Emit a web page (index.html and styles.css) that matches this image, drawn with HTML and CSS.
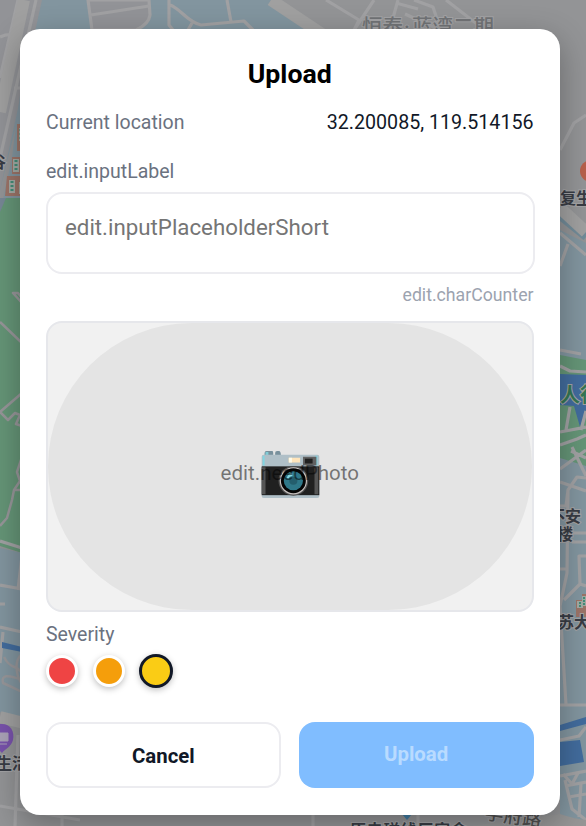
FILE: index.html
```html
<!DOCTYPE html>
<html lang="en">
<head>
<meta charset="utf-8">
<title>Upload</title>
<link rel="stylesheet" href="styles.css">
</head>
<body>
<svg class="map" viewBox="0 0 586 826" aria-hidden="true">
  <rect width="586" height="826" fill="#939496"/>
  <path d="M40 0H272L315 30V60H0V190L20 110Z" fill="#82959f"/>
  <path d="M0 0H42L0 190Z" fill="#929397"/>
  <path d="M88 0H149L150 15Q149 24 136 30H92Z" fill="#929397" class="street"/>
  <path d="M91 15L149 6M169 0V25L173 30M170 5C180 8 187 22 201 25L244 21L253 30M227 0L231 22M192 23L188 30" class="street"/>
  <path d="M18 0L0 78M36 0L0 158M0 37Q8 33 20 36M14 88H22" class="street"/>
  <path d="M24 0L0 112" class="road"/>
  <path d="M271 0L325 36" class="road"/>
  <path d="M326 0L359 20L354 30M374 0L354 30M398 0L393 18L390 30M396 3L418 9M414 0L433 7L438 22M446 0L495 38M405 14L440 30" class="street"/>
  <path d="M560 150L574 123L586 115" class="street"/>
  <path d="M20 95V200H3L12 157Z" fill="#82959f"/>
  <path d="M17 124H24V151H17ZM12 157H23V174H12ZM7 176H24V196H5Z" fill="#9c7468"/>
  <path d="M13 159h6v13h-6zM9 180h6v13H9zM19 128h5v13h-5zM19 182h5v12h-5z" fill="#a3aaa4"/>
  <path d="M16 160v12M12 181v12M21 129v12" stroke="#438d78" stroke-width="3" stroke-dasharray="2 2"/>
  <path d="M0 198H22V553L0 546Z" fill="#659577"/>
  <path d="M0 198H6L0 212Z" fill="#778795"/>
  <path d="M22 303L13 293H18L22 298M0 322L22 343M22 393L0 412L8 420L15 413L20 415L16 424L22 426M22 457L17 472L20 481L14 490L12 500L7 518L0 526M14 490H22" class="path"/>
  <path d="M0 548L22 553V717L0 712Z" fill="#82959f"/>
  <path d="M0 541L22 548M0 585L22 589M0 604H5M22 556L18 590M0 627L22 632M3 632L0 663" class="street"/>
  <path d="M2 642L22 647V652L2 648Z" fill="#426c9d"/>
  <path d="M4 657C11 671 18 664 22 674M22 654C12 662 18 679 22 684M22 680Q0 671 3 683Q12 687 22 692" class="path"/>
  <path d="M0 717L24 723" class="road"/>
  <path d="M18 735L15 826M0 806L80 820M62 814V826M313 814V826M418 814V826" class="street"/>
  <path d="M0 724C10 723 15 731 13 740C11 747 5 749 2 753L0 751Z" fill="#7852ab"/>
  <path d="M0 733H8V741H0M0 744H7" fill="#aaa2b7" stroke="#aaa2b7"/>
  <path d="M560 230L586 243V826H560Z" fill="#82959f"/>
  <path d="M560 216L586 237" stroke="#728b98" stroke-width="8"/>
  <path d="M560 208L586 232" class="road"/>
  <path d="M560 233L586 255M568 244L560 266" class="street"/>
  <path d="M560 355L586 360V466L560 458Z" fill="#659577"/>
  <path d="M560 374L586 375V410L580 427L574 406L560 405Z" fill="#426c9d"/>
  <path d="M560 350L581 354M560 366L570 371L586 372M570 407L566 430M586 411L581 430M560 432L586 427M560 445L577 439L586 435M560 469L586 450M572 447L586 476M560 482L586 491M571 451L586 458" class="street"/>
  <path d="M586 478L577 477L568 490L566 506L560 506M568 490L567 573L560 606L566 705M572 533H586M572 542H586M560 569H568M586 556H579L580 584L564 600M580 584L586 586M560 705H586" class="street"/>
  <path d="M576 600H582V594H586V617H576Z" fill="#9c7468"/>
  <path d="M577 601h6v7h-6zM582 596h4v10h-4z" fill="#a3aaa4"/>
  <path d="M580 602v6M584 597v9" stroke="#438d78" stroke-width="2" stroke-dasharray="2 1"/>
  <path d="M560 725L586 717V724L560 731Z" fill="#426c9d"/>
  <path d="M560 742L580 740L584 762L560 766Z" fill="#426c9d"/>
  <path d="M560 740L579 736L586 727M560 776L586 771M563 774L572 784L578 773M565 786L586 782M565 780L572 809L586 820M569 797L586 794M581 783L579 817" class="street"/>
  <path d="M470 826L560 814Q575 819 586 820V826Z" fill="#969696"/>
  <circle cx="591" cy="171" r="11" fill="#b7604b"/>
  <path d="M402 814H412L407 820Z" fill="#417ca3"/>
  <g class="place">
    <text x="362" y="34" class="area">恒泰<tspan class="dot" x="404">·</tspan><tspan x="412">蓝湾二期</tspan></text>
    <text x="560" y="204" class="small">复生</text>
    <text x="-10" y="168" class="small">谷</text>
    <text x="-4" y="769" class="small">生活</text>
    <text x="560" y="402" class="park">人行</text>
    <text x="549" y="522" class="small">不安</text>
    <text x="557" y="540" class="small">楼</text>
    <text x="558" y="628" class="small">苏大</text>
    <text x="350" y="836" class="small" textLength="117">原电磁线厂宿舍</text>
    <text x="484" y="819" class="way" transform="rotate(8 484 819)">学府路</text>
  </g>
</svg>
<main class="dialog">
  <h1 class="title">Upload</h1>
  <div class="location"><span class="label">Current location</span><span class="coords">32.200085, 119.514156</span></div>
  <label class="label input-label" for="note">edit.inputLabel</label>
  <textarea class="note" id="note" placeholder="edit.inputPlaceholderShort"></textarea>
  <div class="counter">edit.charCounter</div>
  <div class="photo">
    <button class="camera" aria-label="Camera">
      <svg class="camera-icon" viewBox="0 0 60 50">
        <path d="M3 5V2Q3 0 5 0H11Q12 0 12 2V5M14 5V2Q14 0 16 0H18Q20 0 20 5" fill="#78909c"/>
        <path d="M4 1H7V5H4Z" fill="#80cbd5"/>
        <rect y="4" width="60" height="45" rx="2" fill="#afbfc7"/>
        <path d="M2 5V15M57 5V15" stroke="#82d5e1" stroke-width="2"/>
        <rect y="16" width="60" height="30" fill="#202020"/>
        <path d="M2 17V45M57 17V45" stroke="#555" stroke-width="4"/>
        <rect x="28" y="7" width="12" height="5" fill="#ffe5bb"/>
        <path d="M30 7V12" stroke="#fffbe8" stroke-width="3"/>
        <rect x="43" y="6" width="14" height="9" fill="#616161"/>
        <rect x="45" y="8" width="8" height="5" fill="#202020"/>
        <circle cx="33" cy="31" r="15.5" fill="#505050"/>
        <circle cx="33" cy="31" r="14.2" fill="#c8c2c0"/>
        <circle cx="33" cy="31" r="13" fill="#050505"/>
        <circle cx="33" cy="31" r="10" fill="#2f7889"/>
        <circle cx="33" cy="31" r="4.2" fill="#245e6d"/>
        <path d="M26 28Q28 23 32 23V26Q29 26 28 29Z" fill="#82d5e1"/>
      </svg>
    </button>
    <span class="photo-hint">edit.needPhoto</span>
  </div>
  <div class="label severity-label">Severity</div>
  <div class="levels">
    <button class="level high" aria-label="High"></button>
    <button class="level medium" aria-label="Medium"></button>
    <button class="level low selected" aria-label="Low"></button>
  </div>
  <div class="actions">
    <button class="action cancel">Cancel</button>
    <button class="action upload" disabled>Upload</button>
  </div>
</main>
</body>
</html>
```
FILE: styles.css
```css
* { box-sizing: border-box; }
body {
  margin: 0;
  height: 826px;
  overflow: hidden;
  padding: 29px 26px 0 20px;
  font-family: Roboto, "Noto Sans CJK SC", sans-serif;
  color: #111827;
}
button { font: inherit; padding: 0; border: 0; }
.map { position: absolute; left: 0; top: 0; width: 586px; height: 826px; }
.street, .path, .road { stroke: #a1a1a3; stroke-width: 3.2; stroke-linejoin: round; }
.street:not([fill]), .path, .road { fill: none; }
.path { stroke: #979699; stroke-width: 2.5; }
.road { stroke: #a0a0a0; stroke-width: 12; }
.place { font-family: "Noto Sans CJK SC", sans-serif; font-weight: 700; paint-order: stroke; stroke: #a3a3a5; stroke-width: 2px; fill: #383c44; }
.area { font-size: 20.5px; font-weight: 500; fill: #717376; }
.dot { font-family: Roboto, sans-serif; }
.small { font-size: 16px; }
.park { font-size: 20px; fill: #347653; }
.way { font-size: 19px; font-weight: 500; fill: #515151; }
.dialog {
  position: relative;
  display: flex;
  flex-direction: column;
  width: 540px;
  height: 785.5px;
  padding: 26px 26.5px 26px 26px;
  border-radius: 20px;
  background: #fff;
  box-shadow: 0 10px 32px rgba(0, 0, 0, .3);
}
.title { margin: 0; font-size: 26.7px; line-height: 38px; font-weight: 700; text-align: center; color: #000; }
.location { display: flex; justify-content: space-between; height: 30px; margin-top: 14px; }
.coords { font-size: 19.65px; line-height: 31px; }
.label { color: #6b7280; font-size: 19.5px; }
.location .label { line-height: 32px; }
.input-label { margin-top: 21px; line-height: 28px; }
.note {
  display: block;
  width: 489px;
  height: 82px;
  margin: 6px 0 0;
  padding: 17px;
  border: 2px solid #ececf0;
  border-radius: 16px;
  resize: none;
  font: 22.3px/33px Roboto, sans-serif;
}
.note::placeholder { color: #757575; }
.counter { margin-top: 7px; font-size: 17.7px; line-height: 28px; text-align: right; color: #9ca3af; }
.photo { display: grid; height: 291px; margin-top: 12px; border: 2px solid #e6e7eb; border-radius: 16px; background: #f1f1f1; overflow: hidden; }
.photo > * { grid-area: 1 / 1; }
.camera { display: grid; place-items: center; border-radius: 145px; background: #e4e4e4; }
.camera-icon { width: 59px; height: 48px; margin: 16px 0 0 2px; overflow: visible; }
.photo-hint { place-self: center; margin-top: 12px; font-size: 20.5px; line-height: 28px; color: rgba(0, 0, 0, .5); }
.severity-label { margin-top: 9px; line-height: 28px; }
.levels { display: flex; align-items: center; gap: 14.5px; height: 34px; margin-top: 5px; }
.level { width: 32px; height: 32px; border: 3px solid #fff; border-radius: 50%; box-shadow: 0 2px 6px rgba(0, 0, 0, .25); }
.high { background: #ef4444; }
.medium { background: #f59e0b; }
.low { background: #facc15; }
.selected { width: 34px; height: 34px; border-color: #111827; }
.actions { display: grid; grid-template-columns: 1fr 1fr; gap: 18px; height: 66px; margin-top: 34px; }
.action { border-radius: 16px; font-size: 20.4px; font-weight: 700; }
.cancel { border: 2px solid #ececf0; background: #fff; color: #111827; padding-top: 2px; }
.upload { background: #80bdff; color: #b9dbff; padding-bottom: 2px; }
```
